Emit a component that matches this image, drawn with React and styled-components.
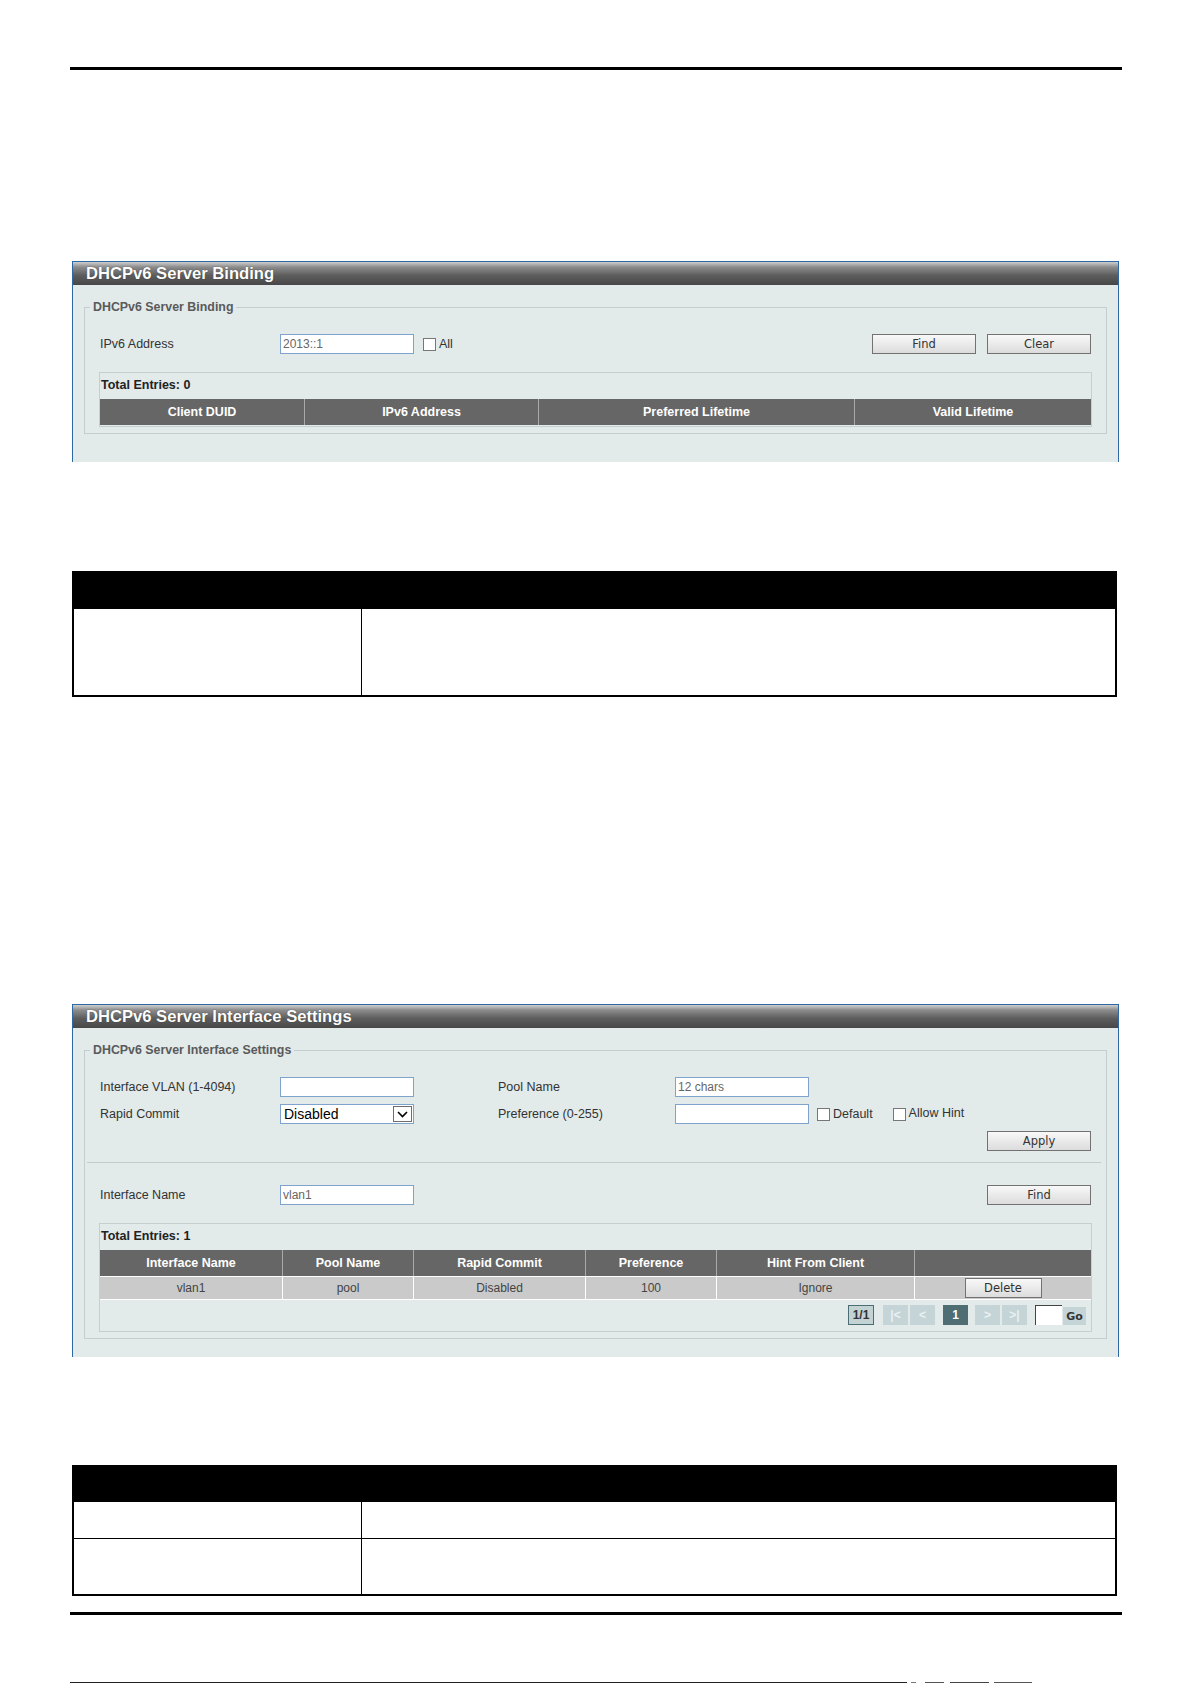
import styled, { createGlobalStyle } from "styled-components";

const GlobalStyle = createGlobalStyle`
  html, body {
    margin: 0;
    padding: 0;
    background: #fff;
  }
  body {
    font-family: "Liberation Sans", Arial, sans-serif;
    font-size: 12px;
    color: #333;
  }
`;

const Page = styled.div`
  width: 1192px;
  height: 1684px;
  box-sizing: border-box;
  padding: 67px 70px 0;
  display: flex;
  flex-direction: column;
  overflow: hidden;
  & > * {
    flex-shrink: 0;
  }
`;

const Rule = styled.div`
  height: 3px;
  background: #000;
  margin-top: ${(p) => p.$top || 0}px;
`;

const Panel = styled.section`
  margin: ${(p) => p.$top}px 3px 0 2px;
  background: #e2eaea;
  border: 1px solid #2d68a3;
  border-bottom: none;
`;

const PanelTitle = styled.h2`
  margin: 0;
  height: 23px;
  line-height: 23px;
  padding-left: 13px;
  font-size: 16.6px;
  font-weight: bold;
  color: #fff;
  background: linear-gradient(#cfcfcf 0%, #8c8c8c 22%, #5d5d5d 58%, #474747 100%);
  text-shadow: 0 0 1px #2a2a2a;
`;

const PanelBody = styled.div`
  padding: 15px 11px ${(p) => p.$bottom}px;
`;

const Group = styled.fieldset`
  margin: 0;
  min-width: 0;
  padding: 20px 14px 6px;
  border: 1px solid #c5cece;
`;

const GroupLegend = styled.legend`
  margin-left: -9px;
  padding: 0 3px;
  font-size: 12.4px;
  line-height: 14px;
  font-weight: bold;
  color: #5a5a5a;
`;

const FormGrid = styled.div`
  display: grid;
  grid-template-columns: 181px 217px 178px 1fr;
  grid-auto-rows: 20px;
  row-gap: 7px;
  align-items: center;
`;

const Label = styled.label`
  padding-left: 1px;
  font-size: 12.5px;
  color: #333;
  white-space: nowrap;
`;

const Field = styled.div`
  display: flex;
  align-items: center;
  grid-column: ${(p) => p.$span || "auto"};
`;

const Actions = styled.div`
  grid-column: ${(p) => (p.$wide ? "1 / -1" : "4")};
  display: flex;
  justify-content: flex-end;
  gap: 11px;
  margin-right: 1px;
`;

const TextInput = styled.input`
  box-sizing: border-box;
  width: 134px;
  height: 20px;
  margin: 0;
  padding: 0 2px;
  border: 1px solid #7ea3cc;
  background: #fff;
  font: 12px "Liberation Sans", Arial, sans-serif;
  color: #666;
  outline: none;
`;

const Select = styled.div`
  box-sizing: border-box;
  width: 134px;
  height: 20px;
  display: flex;
  align-items: center;
  justify-content: space-between;
  padding: 0 1px 0 3px;
  border: 1px solid #7ea3cc;
  background: #fff;
  font-size: 14px;
  color: #000;
`;

const SelectArrow = styled.span`
  box-sizing: border-box;
  width: 19px;
  height: 16px;
  display: flex;
  align-items: center;
  justify-content: center;
  border: 1px solid #6e6e6e;
  background: #fff;
`;

const Check = styled.input.attrs({ type: "checkbox", readOnly: true })`
  appearance: none;
  box-sizing: border-box;
  width: 13px;
  height: 13px;
  margin: 0 3px 0 ${(p) => p.$gap ?? 8}px;
  border: 1px solid #777;
  background: #fff;
`;

const CheckText = styled.span`
  font-size: 12.5px;
  color: #333;
  margin-top: ${(p) => (p.$raise ? "-3px" : "0")};
`;

const Button = styled.button`
  box-sizing: border-box;
  width: ${(p) => p.$w || 104}px;
  height: 20px;
  padding: 0;
  border: 1px solid #727272;
  background: linear-gradient(#f8f8f8, #dcdcdc);
  font: 11.5px "DejaVu Sans", Verdana, sans-serif;
  color: #333;
`;

const Divider = styled.hr`
  margin: 11px -9px 22px -12px;
  border: 0;
  height: 1px;
  background: #c3cbcb;
`;

const EntriesBox = styled.div`
  margin-top: 18px;
  border: 1px solid #c6cece;
  padding-bottom: 1px;
`;

const EntriesCount = styled.div`
  height: 26px;
  line-height: 25px;
  padding-left: 1px;
  font-size: 12.5px;
  font-weight: bold;
  color: #222;
`;

const GridRow = styled.div`
  display: grid;
  grid-template-columns: ${(p) => p.$cols};
`;

const HeadCell = styled.div`
  height: 26px;
  display: flex;
  align-items: center;
  justify-content: center;
  background: #666;
  color: #fff;
  font-weight: bold;
  font-size: 12.5px;
  & + & {
    border-left: 1px solid #a9a9a9;
  }
`;

const DataCell = styled.div`
  height: 22px;
  display: flex;
  align-items: center;
  justify-content: center;
  border-top: 1px solid #fff;
  border-bottom: 1px solid #fff;
  background: #cacaca;
  color: #444;
  font-size: 12px;
  & + & {
    border-left: 1px solid #fff;
  }
`;

const Pager = styled.div`
  height: 30px;
  display: flex;
  align-items: center;
  justify-content: flex-end;
  padding-right: 5px;
`;

const PageInfo = styled.span`
  box-sizing: border-box;
  width: 26px;
  height: 20px;
  margin-right: 9px;
  display: flex;
  align-items: center;
  justify-content: center;
  border: 1px solid #4b6e74;
  background: #c3d3d4;
  font-weight: bold;
  font-size: 12px;
  color: #333;
`;

const PageBtn = styled.span`
  width: 25px;
  height: 20px;
  margin-left: ${(p) => p.$gap ?? 2}px;
  display: flex;
  align-items: center;
  justify-content: center;
  font-weight: bold;
  font-size: 12px;
  background: ${(p) => (p.$current ? "#4e6e73" : "#c5d5d7")};
  color: ${(p) => (p.$current ? "#fff" : "#e9f1f1")};
`;

const PageInput = styled.input`
  box-sizing: border-box;
  width: 27px;
  height: 20px;
  margin: 0 0 0 8px;
  padding: 0;
  border: 0;
  border-top: 1px solid #444;
  border-left: 1px solid #444;
  background: #fff;
`;

const GoButton = styled.button`
  box-sizing: border-box;
  width: 23px;
  height: 18px;
  margin: 2px 0 0 1px;
  padding: 0;
  border: 0;
  background: #c5d5d7;
  font: bold 11px "DejaVu Sans", Verdana, sans-serif;
  color: #333;
`;

const DocTable = styled.table`
  margin: ${(p) => p.$top}px 0 0 2px;
  width: 1045px;
  border-collapse: collapse;
  table-layout: fixed;
  border: 2px solid #000;
`;

const DocHead = styled.th`
  height: ${(p) => p.$h}px;
  padding: 0;
  background: #000;
  border: 1px solid #000;
`;

const DocCell = styled.td`
  height: ${(p) => p.$h}px;
  padding: 0;
  border: 1px solid #000;
`;

const FootLine = styled.div`
  margin-top: 67px;
  height: 1px;
  display: flex;
`;

const FootMark = styled.span`
  width: ${(p) => p.$w}px;
  height: 1px;
  margin-left: ${(p) => p.$gap || 0}px;
  background: ${(p) => p.$c || "#222"};
`;

const Chevron = () => (
  <svg width="11" height="7" viewBox="0 0 11 7">
    <path d="M1 1l4.5 4.5L10 1" fill="none" stroke="#000" strokeWidth="1.6" />
  </svg>
);

const bindingCols = "204px 234px 316px 1fr";
const ifaceCols = "182px 131px 172px 131px 198px 1fr";

const App = () => {
  return (
    <>
      <GlobalStyle />
      <Page>
        <Rule />

        <Panel $top={191}>
          <PanelTitle>DHCPv6 Server Binding</PanelTitle>
          <PanelBody $bottom={28}>
            <Group>
              <GroupLegend>DHCPv6 Server Binding</GroupLegend>
              <FormGrid>
                <Label>IPv6 Address</Label>
                <Field $span="2 / 4">
                  <TextInput defaultValue="2013::1" />
                  <Check $gap={9} />
                  <CheckText>All</CheckText>
                </Field>
                <Actions>
                  <Button>Find</Button>
                  <Button>Clear</Button>
                </Actions>
              </FormGrid>
              <EntriesBox>
                <EntriesCount>Total Entries: 0</EntriesCount>
                <GridRow $cols={bindingCols}>
                  <HeadCell>Client DUID</HeadCell>
                  <HeadCell>IPv6 Address</HeadCell>
                  <HeadCell>Preferred Lifetime</HeadCell>
                  <HeadCell>Valid Lifetime</HeadCell>
                </GridRow>
              </EntriesBox>
            </Group>
          </PanelBody>
        </Panel>

        <DocTable $top={109}>
          <colgroup>
            <col width="288" />
            <col />
          </colgroup>
          <thead>
            <tr>
              <DocHead $h={35} />
              <DocHead $h={35} />
            </tr>
          </thead>
          <tbody>
            <tr>
              <DocCell $h={86} />
              <DocCell $h={86} />
            </tr>
          </tbody>
        </DocTable>

        <Panel $top={307}>
          <PanelTitle>DHCPv6 Server Interface Settings</PanelTitle>
          <PanelBody $bottom={18}>
            <Group>
              <GroupLegend>DHCPv6 Server Interface Settings</GroupLegend>
              <FormGrid>
                <Label>Interface VLAN (1-4094)</Label>
                <Field>
                  <TextInput />
                </Field>
                <Label>Pool Name</Label>
                <Field>
                  <TextInput defaultValue="12 chars" />
                </Field>

                <Label>Rapid Commit</Label>
                <Field>
                  <Select>
                    <span>Disabled</span>
                    <SelectArrow>
                      <Chevron />
                    </SelectArrow>
                  </Select>
                </Field>
                <Label>Preference (0-255)</Label>
                <Field>
                  <TextInput />
                  <Check />
                  <CheckText>Default</CheckText>
                  <Check $gap={20} />
                  <CheckText $raise>Allow Hint</CheckText>
                </Field>

                <Actions $wide>
                  <Button>Apply</Button>
                </Actions>
              </FormGrid>

              <Divider />

              <FormGrid>
                <Label>Interface Name</Label>
                <Field>
                  <TextInput defaultValue="vlan1" />
                </Field>
                <Actions>
                  <Button>Find</Button>
                </Actions>
              </FormGrid>

              <EntriesBox>
                <EntriesCount>Total Entries: 1</EntriesCount>
                <GridRow $cols={ifaceCols}>
                  <HeadCell>Interface Name</HeadCell>
                  <HeadCell>Pool Name</HeadCell>
                  <HeadCell>Rapid Commit</HeadCell>
                  <HeadCell>Preference</HeadCell>
                  <HeadCell>Hint From Client</HeadCell>
                  <HeadCell />
                </GridRow>
                <GridRow $cols={ifaceCols}>
                  <DataCell>vlan1</DataCell>
                  <DataCell>pool</DataCell>
                  <DataCell>Disabled</DataCell>
                  <DataCell>100</DataCell>
                  <DataCell>Ignore</DataCell>
                  <DataCell>
                    <Button $w={77}>Delete</Button>
                  </DataCell>
                </GridRow>
                <Pager>
                  <PageInfo>1/1</PageInfo>
                  <PageBtn $gap={0}>|&lt;</PageBtn>
                  <PageBtn>&lt;</PageBtn>
                  <PageBtn $current $gap={8}>
                    1
                  </PageBtn>
                  <PageBtn $gap={7}>&gt;</PageBtn>
                  <PageBtn>&gt;|</PageBtn>
                  <PageInput />
                  <GoButton>Go</GoButton>
                </Pager>
              </EntriesBox>
            </Group>
          </PanelBody>
        </Panel>

        <DocTable $top={108}>
          <colgroup>
            <col width="288" />
            <col />
          </colgroup>
          <thead>
            <tr>
              <DocHead $h={34} />
              <DocHead $h={34} />
            </tr>
          </thead>
          <tbody>
            <tr>
              <DocCell $h={36} />
              <DocCell $h={36} />
            </tr>
            <tr>
              <DocCell $h={55} />
              <DocCell $h={55} />
            </tr>
          </tbody>
        </DocTable>

        <Rule $top={16} />

        <FootLine>
          <FootMark $w={837} />
          <FootMark $w={5} $gap={4} $c="#777" />
          <FootMark $w={19} $gap={9} $c="#555" />
          <FootMark $w={39} $gap={6} $c="#444" />
          <FootMark $w={38} $gap={5} $c="#555" />
        </FootLine>
      </Page>
    </>
  );
};

export default App;
